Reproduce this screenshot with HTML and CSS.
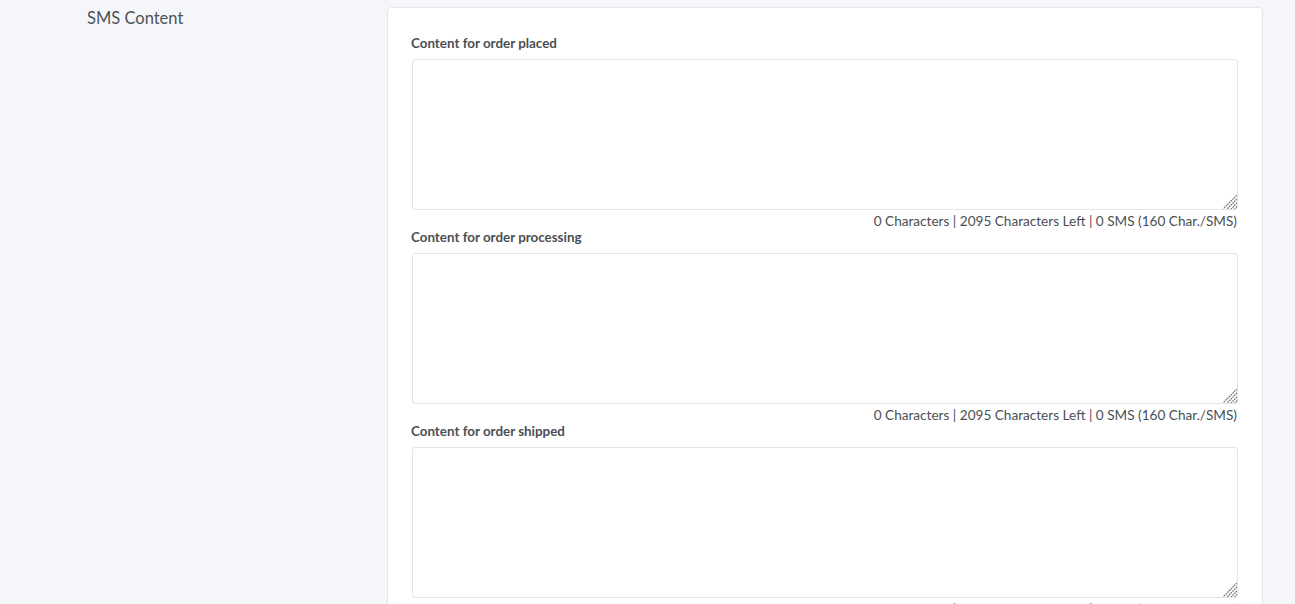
FILE: index.html
```html
<!DOCTYPE html>
<html>
<head>
<meta charset="utf-8">
<link rel="stylesheet" href="styles.css">
</head>
<body>
<div class="row">
  <div class="side">SMS Content</div>
  <div class="card">
    <div class="field">
      <label class="lbl">Content for order placed</label>
      <textarea class="ta"></textarea>
      <div class="help">0 Characters | 2095 Characters Left | 0 SMS (160 Char./SMS)</div>
    </div>
    <div class="field">
      <label class="lbl">Content for order processing</label>
      <textarea class="ta"></textarea>
      <div class="help">0 Characters | 2095 Characters Left | 0 SMS (160 Char./SMS)</div>
    </div>
    <div class="field">
      <label class="lbl">Content for order shipped</label>
      <textarea class="ta"></textarea>
      <div class="help">0 Characters | 2095 Characters Left | 0 SMS (160 Char./SMS)</div>
    </div>
  </div>
</div>
</body>
</html>
```
FILE: styles.css
```css
html, body {
  margin: 0;
  padding: 0;
  background: #f5f6fa;
  font-family: "Lato", "Liberation Sans", sans-serif;
  color: #4a4f55;
  overflow: hidden;
}
.row {
  display: flex;
  padding: 7px 0 0 87px;
}
.side {
  width: 300px;
  flex: none;
  font-size: 16.5px;
  line-height: 22px;
  color: #4d5258;
}
.card {
  width: 826px;
  flex: none;
  background: #fff;
  border: 1px solid #e3e6ec;
  border-radius: 4px;
  padding: 27px 25px 0 23px;
}
.field {
  display: flex;
  flex-direction: column;
}
.lbl {
  font-size: 13.4px;
  font-weight: 700;
  line-height: 16px;
  margin-bottom: 8px;
  color: #4a4f55;
}
.ta {
  box-sizing: border-box;
  height: 151px;
  width: 826px;
  margin: 0 0 0 1px;
  border: 1px solid #dfe3ea;
  border-radius: 3px;
  background-color: #fff;
  background-image: url("data:image/svg+xml,%3Csvg xmlns='http://www.w3.org/2000/svg' width='14' height='14'%3E%3Cg stroke='%23707070' stroke-width='1.3' stroke-dasharray='1.6 0.8'%3E%3Cline x1='14' y1='0' x2='0' y2='14'/%3E%3Cline x1='14' y1='4' x2='4' y2='14'/%3E%3Cline x1='14' y1='8' x2='8' y2='14'/%3E%3Cline x1='14' y1='11.5' x2='11.5' y2='14'/%3E%3C/g%3E%3C/svg%3E");
  background-repeat: no-repeat;
  background-position: right 0 bottom 0;
  resize: none;
  padding: 6px 10px;
}
.help {
  text-align: right;
  font-size: 13.6px;
  line-height: 16px;
  margin-top: 3px;
  color: #4a4f55;
}
```
